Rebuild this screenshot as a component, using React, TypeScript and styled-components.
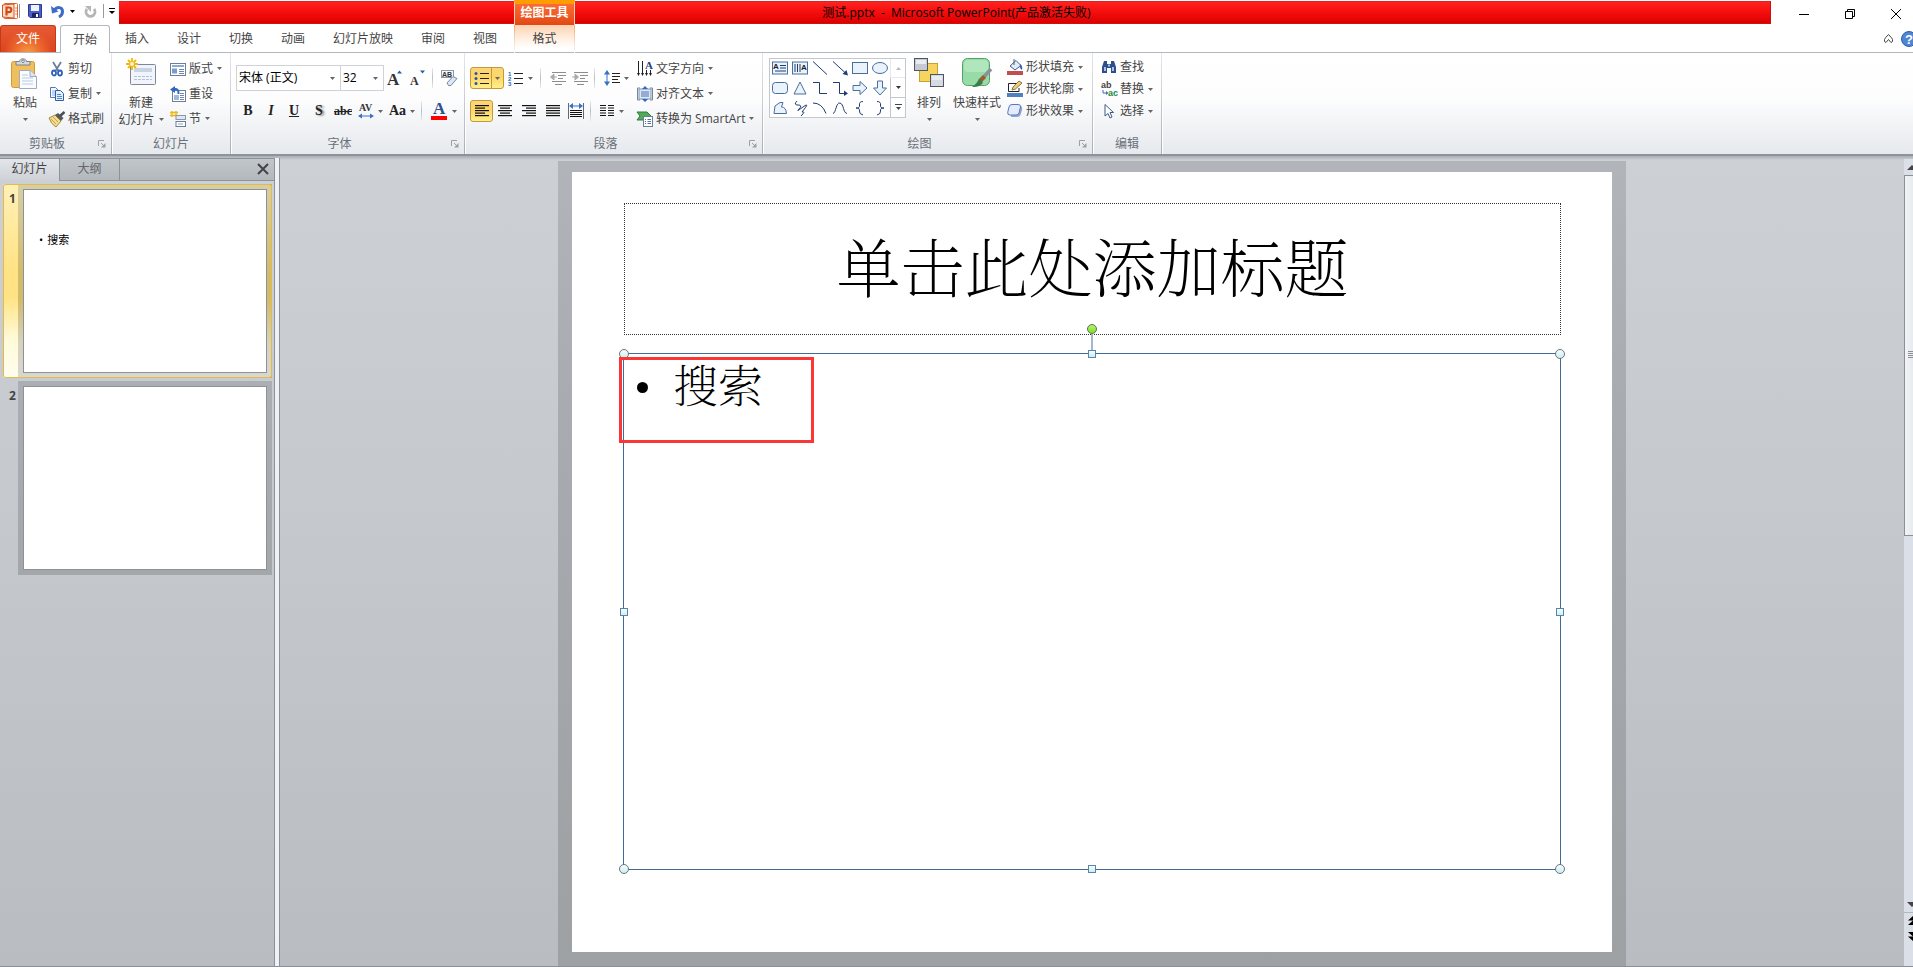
import React from "react";
import styled, { createGlobalStyle, css } from "styled-components";

const UI = `"Open Sans", "Noto Sans CJK SC", sans-serif`;
const SERIF = `"Liberation Serif", serif`;

const GlobalStyle = createGlobalStyle`
  * { box-sizing: border-box; }
  body { margin: 0; background: #fff; font-family: ${UI}; font-size: 12px; line-height: 16px; color: #444; }
  button, select { font: inherit; color: inherit; margin: 0; padding: 0; border: 0; background: none; white-space: nowrap; }
  svg { display: block; flex: none; overflow: visible; }
  h1, h2, p, ul { margin: 0; padding: 0; font-weight: 400; }
`;

/* ---------- window frame ---------- */

const Window = styled.div`
  display: flex;
  flex-direction: column;
  min-height: 100vh;
  overflow: hidden;
  border-bottom: 1px solid #8b9097;
`;

const TitleBar = styled.header`
  position: relative;
  display: flex;
  height: 25px;
`;

const QuickAccess = styled.div`
  display: flex;
  align-items: center;
  width: 119px;
  height: 22px;
  flex: none;
`;

const QuickButton = styled.button<{ $w: number }>`
  display: flex;
  align-items: center;
  justify-content: center;
  width: ${(p) => p.$w}px;
  height: 20px;
`;

const QuickRule = styled.span`
  width: 1px;
  height: 14px;
  margin-right: 2px;
  background: #9a9a9a;
`;

const RedStrip = styled.div`
  flex: 1;
  display: flex;
  height: 23px;
  margin-top: 1px;
  padding-left: 395px;
  border: 1px solid #c11;
  border-left: 0;
  border-top-color: #d22;
  background: linear-gradient(#ff231f, #f60f0f 45%, #dc0000);
`;

const ContextHeader = styled.div`
  width: 61px;
  height: 25px;
  margin-top: -2px;
  border-top: 4px solid #ff9c00;
  border-left: 1px solid #ffd0b8;
  border-right: 1px solid #ffd0b8;
  background: linear-gradient(#fb6b35, #ee5a24 55%, #e24613);
  color: #fff;
  font-weight: 700;
  text-align: center;
  line-height: 18px;
  white-space: nowrap;
`;

const DocTitle = styled.div`
  position: absolute;
  left: 0;
  right: 0;
  top: 5px;
  text-align: center;
  color: #000;
  pointer-events: none;
`;

const WindowButtons = styled.div`
  display: flex;
  margin: 0 -6px 0 10px;
`;

const WindowButton = styled.button`
  display: flex;
  align-items: center;
  justify-content: center;
  width: 46px;
  height: 28px;
`;

const TabRow = styled.nav`
  display: flex;
  height: 28px;
  border-bottom: 1px solid #b3b8bf;
`;

const FileTab = styled.button`
  width: 56px;
  height: 27px;
  margin-right: 4px;
  border: 1px solid #c23b12;
  border-bottom: 0;
  border-radius: 3px 3px 0 0;
  color: #fff;
  background: radial-gradient(ellipse at 50% 110%, #f7a04a 0, #ec6a2c 35%, transparent 65%), linear-gradient(#e65a34, #dc4420);
`;

const Tab = styled.button<{ $active?: boolean }>`
  height: 28px;
  padding: 0 14px;
  ${(p) =>
    p.$active &&
    css`
      width: 50px;
      padding: 0;
      margin-right: 1px;
      border: 1px solid #b3b8bf;
      border-bottom: 0;
      border-radius: 3px 3px 0 0;
      background: #fff;
    `}
`;

const ContextTab = styled.button`
  width: 61px;
  height: 28px;
  margin-left: 3px;
  border: 1px solid transparent;
  border-width: 0 1px;
  border-image: linear-gradient(#f3a76a, #fff) 1;
  background: linear-gradient(#fdd3b3, #fff3e8 60%, #fff 90%) 0 0 / 100% 26px no-repeat;
`;

const TabRowEnd = styled.div`
  display: flex;
  align-items: center;
  gap: 8px;
  margin: 0 -4px 0 auto;
`;

/* ---------- ribbon ---------- */

const Ribbon = styled.div`
  display: flex;
  height: 103px;
  border-bottom: 2px solid #8e939a;
  background: linear-gradient(#fff, #fdfdfe 45%, #eef0f3 80%, #e6e9ed);
`;

const Group = styled.section<{ $w: number }>`
  display: flex;
  flex-direction: column;
  flex: none;
  width: ${(p) => p.$w}px;
  height: 101px;
  border-right: 1px solid #fff;
  background: linear-gradient(#e4e6ea, #a9afb6) right / 1px 100% no-repeat;
`;

const GroupBody = styled.div<{ $pad: number }>`
  display: flex;
  flex: 1;
  padding: 3px 0 0 ${(p) => p.$pad}px;
`;

const GroupFoot = styled.footer`
  display: flex;
  align-items: center;
  height: 20px;
  padding-right: 2px;
  color: #6a7079;
`;

const GroupName = styled.h2`
  flex: 1;
  font-size: 12px;
  text-align: center;
`;

const Launcher = styled.button`
  display: flex;
  justify-content: center;
  align-items: center;
  width: 16px;
  height: 16px;
`;

const Big = styled.button<{ $w: number }>`
  display: flex;
  flex-direction: column;
  align-items: center;
  width: ${(p) => p.$w}px;
  height: 74px;
  padding-top: 2px;
`;

const BigIcon = styled.span`
  display: flex;
  height: 34px;
  margin-bottom: 2px;
`;

const BigLine = styled.span`
  display: flex;
  align-items: center;
  gap: 4px;
  height: 17px;
`;

const Stack = styled.div<{ $ml: number; $row: number }>`
  display: flex;
  flex-direction: column;
  align-items: flex-start;
  margin-left: ${(p) => p.$ml}px;
  & > button { height: ${(p) => p.$row}px; }
`;

const Small = styled.button`
  display: flex;
  align-items: center;
  gap: 3px;
`;

const CaretBox = styled.span`
  padding-left: 1px;
`;

const Rows = styled.div`
  display: flex;
  flex-direction: column;
  gap: 7px;
  padding-top: 9px;
`;

const Row = styled.div`
  display: flex;
  align-items: center;
  height: 26px;
`;

const Rule = styled.span<{ $l: number; $r: number }>`
  width: 1px;
  height: 20px;
  margin: 0 ${(p) => p.$r}px 0 ${(p) => p.$l}px;
  background: linear-gradient(#e8eaed, #b9bec5, #e8eaed);
`;

const Combo = styled.label<{ $w: number }>`
  display: flex;
  align-items: center;
  width: ${(p) => p.$w}px;
  height: 26px;
  margin-right: -1px;
  padding: 0 5px 0 2px;
  border: 1px solid #cfd3d8;
  background: #fff;
  color: #000;
`;

const ComboSelect = styled.select`
  appearance: none;
  flex: 1;
  min-width: 0;
  height: 20px;
  outline: none;
`;

const Tool = styled.button<{ $w: number }>`
  display: flex;
  align-items: center;
  justify-content: center;
  gap: 4px;
  width: ${(p) => p.$w}px;
  height: 22px;
`;

const Letter = styled(Tool)<{ $small?: boolean; $shadow?: boolean }>`
  font-family: ${SERIF};
  font-weight: 700;
  font-size: ${(p) => (p.$small ? 12 : 14)}px;
  color: #222;
  text-shadow: ${(p) => (p.$shadow ? "2px 1px 2px #888" : "none")};
`;

const gold = css`
  border: 1px solid #c29a3c;
  border-radius: 3px;
  background: linear-gradient(#fbd578, #fdd668 45%, #ffef8a);
`;

const GoldTool = styled(Tool)`
  ${gold}
`;

const SplitGold = styled.div`
  display: flex;
  width: 34px;
  height: 22px;
  ${gold}
`;

const SplitPart = styled.button<{ $w: number; $line?: boolean }>`
  display: flex;
  align-items: center;
  justify-content: center;
  width: ${(p) => p.$w}px;
  border-left: ${(p) => (p.$line ? "1px solid #c29a3c" : "0")};
`;

const Gallery = styled.div`
  display: flex;
  width: 137px;
  height: 60px;
  margin-top: 2px;
  border: 1px solid #c3c8ce;
  background: #fff;
`;

const GalleryGrid = styled.div`
  display: grid;
  grid-template-columns: repeat(6, 20px);
  grid-auto-rows: 20px;
  margin-top: -1px;
  flex: 1;
`;

const ShapeButton = styled.button`
  display: flex;
  align-items: center;
  justify-content: center;
`;

const GalleryNav = styled.div`
  display: grid;
  grid-template-rows: repeat(3, 1fr);
  width: 15px;
`;

const NavButton = styled.button<{ $off?: boolean }>`
  display: flex;
  align-items: center;
  justify-content: center;
  border-left: 1px solid #c3c8ce;
  border-bottom: 1px solid #c3c8ce;
  opacity: ${(p) => (p.$off ? 0.4 : 1)};
  &:last-child { border-bottom: 0; }
`;

/* ---------- workspace ---------- */

const Workspace = styled.main`
  display: flex;
  flex: 1;
  background: linear-gradient(#a9adb3 0, #cdd0d5 4px, #c4c7cc 50%, #b9bcc1);
`;

const Sidebar = styled.aside`
  width: 275px;
  flex: none;
  margin-top: 2px;
  border-right: 1px solid #8b9299;
  border-top: 1px solid #8b9299;
`;

const Splitter = styled.div`
  width: 5px;
  flex: none;
  margin-top: 2px;
  background: #eef1f5;
  border-right: 1px solid #8b9299;
`;

const PaneTabs = styled.div`
  display: flex;
  height: 22px;
  border-bottom: 1px solid #8b9299;
  background: linear-gradient(#c0c6ca, #b3b8bd);
`;

const PaneTab = styled.button<{ $active?: boolean }>`
  width: 60px;
  height: ${(p) => (p.$active ? 22 : 21)}px;
  padding-bottom: 2px;
  border-right: 1px solid #8b9299;
  color: ${(p) => (p.$active ? "#444" : "#666")};
  background: ${(p) => (p.$active ? "linear-gradient(#e2e5e9, #cdd0d5)" : "none")};
`;

const PaneClose = styled.button`
  display: flex;
  align-items: center;
  justify-content: center;
  width: 22px;
  height: 20px;
  margin-left: auto;
`;

const ThumbItem = styled.button<{ $active?: boolean }>`
  display: flex;
  width: 269px;
  height: 194px;
  margin: 3px 0 0 3px;
  text-align: left;
  ${(p) =>
    p.$active &&
    css`
      border-radius: 3px;
      outline: 1px solid #e3bc45;
      outline-offset: -1px;
      background: linear-gradient(#fff0b8, #ffe283 45%, #ffe283 58%, #fffbd8 80%, #fffdee);
    `}
`;

const ThumbNumber = styled.span`
  width: 15px;
  padding: 7px 0 0 6px;
  font-size: 12px;
  font-weight: 700;
`;

const ThumbFrame = styled.span<{ $active?: boolean }>`
  flex: 1;
  display: block;
  height: 194px;
  padding: 5px;
  ${(p) =>
    p.$active
      ? css`
          border: 1px solid #d5b24c;
          border-left: 0;
          padding: 4px 4px 4px 5px;
          background: linear-gradient(#d6cfa6, #d3bb6c 45%, #d3bb6c 60%, #d6d2bd 82%, #d8d7d0);
        `
      : css`
          background: linear-gradient(#abaeb3, #a3a7aa);
        `}
`;

const ThumbPage = styled.span`
  display: flex;
  gap: 4px;
  height: 184px;
  padding: 42px 0 0 15px;
  border: 1px solid #8d9198;
  background: #fff;
  color: #000;
  font-size: 11px;
`;

const Stage = styled.div`
  flex: 1;
  display: flex;
  justify-content: center;
  align-items: flex-start;
  padding-top: 5px;
  min-width: 0;
`;

const SlideFrame = styled.div`
  width: 100%;
  max-width: 1068px;
  padding: 11px 14px 14px;
  background: linear-gradient(#b1b4b9, #a8abaf 30%, #9da1a4);
`;

const Slide = styled.article`
  aspect-ratio: 4 / 3;
  padding: 3% 5% 0;
  background: #fff;
  color: #000;
  font-family: "Noto Serif CJK SC", "Noto Sans CJK SC", sans-serif;
`;

const TitleHolder = styled.div`
  display: flex;
  align-items: center;
  justify-content: center;
  height: 132px;
  margin: 0 -1px 18px 0;
  padding-bottom: 10px;
  border: 1px dotted #333;
`;

const SlideTitle = styled.h1`
  font-size: 64px;
  line-height: 72px;
  font-weight: 200;
`;

const BodyHolder = styled.div`
  position: relative;
  height: 517px;
  margin: 0 -1px;
  padding: 0 13px;
  border: 1px solid #41699a;
`;

const BulletList = styled.ul`
  list-style: none;
  font-size: 45px;
  font-weight: 200;
  line-height: 60px;
`;

const BulletItem = styled.li`
  display: flex;
  gap: 25px;
  &::before {
    content: "";
    width: 11px;
    height: 11px;
    margin-top: 28px;
    border-radius: 50%;
    background: #000;
  }
`;

const Handle = styled.span<{ $x: string; $y: string; $round?: boolean }>`
  position: absolute;
  left: ${(p) => p.$x};
  top: ${(p) => p.$y};
  width: ${(p) => (p.$round ? 10 : 8)}px;
  height: ${(p) => (p.$round ? 10 : 8)}px;
  transform: translate(-50%, -50%);
  border: 1px solid ${(p) => (p.$round ? "#6b7480" : "#5c83ab")};
  border-radius: ${(p) => (p.$round ? "50%" : "0")};
  background: linear-gradient(#f4fdfd, #cdeeee);
`;

const RotateStem = styled.span`
  position: absolute;
  left: 50%;
  top: -20px;
  width: 2px;
  height: 16px;
  margin-left: -1px;
  background: #a3b8cf;
`;

const RotateHandle = styled.span`
  position: absolute;
  left: 50%;
  top: -30px;
  width: 10px;
  height: 10px;
  margin-left: -5px;
  border: 1px solid #5d6e4c;
  border-radius: 50%;
  background: linear-gradient(#b2f56a, #7fe02a);
`;

const Callout = styled.div`
  position: absolute;
  left: -5px;
  top: 3px;
  width: 195px;
  height: 86px;
  border: 3px solid #fb3735;
`;

const ScrollColumn = styled.div`
  display: flex;
  flex-direction: column;
  width: 9px;
  flex: none;
  margin-top: 3px;
  overflow: hidden;
  background: #dbdfe8;
`;

const ScrollButton = styled.button<{ $h: number; $line?: boolean }>`
  display: flex;
  flex: none;
  align-items: center;
  width: 17px;
  height: ${(p) => p.$h}px;
  padding-left: 3px;
  border-top: ${(p) => (p.$line ? "1px solid #b4b8be" : "0")};
`;

const ScrollTrack = styled.div`
  flex: 1;
  width: 17px;
`;

const ScrollThumb = styled.div`
  display: flex;
  align-items: center;
  height: 50%;
  width: 17px;
  padding-left: 3px;
  border: 1px solid #8b9097;
  background: linear-gradient(90deg, #f2f4f7, #dfe2e7);
`;

const ScrollEnd = styled.div`
  height: 22px;
`;

/* ---------- icons ---------- */

type IconProps = { w?: number; h?: number; children: React.ReactNode };
const Icon = ({ w = 16, h = 16, children }: IconProps) => (
  <svg width={w} height={h} viewBox={`0 0 ${w} ${h}`} fill="none" aria-hidden="true">
    {children}
  </svg>
);

const Caret = ({ color = "#666" }: { color?: string }) => (
  <Icon w={5} h={3}><path d="M0 0H5L2.5 3Z" fill={color} /></Icon>
);

const LaunchIcon = () => (
  <Icon w={8} h={8}>
    <path d="M.5 6V.5H6" stroke="#9aa0a8" /><path d="M3 3l3 3" stroke="#9aa0a8" /><path d="M7.500 3v4.500H3z" fill="#9aa0a8" />
  </Icon>
);

const AppLogo = () => (
  <Icon>
    <rect x="2" y=".5" width="13.500" height="15" rx="1" fill="#fff" stroke="#e0622c" />
    <path d="M.5 2L12 1V15L.5 14Z" fill="#fbe0d0" stroke="#d9531e" />
    <path d="M4.500 12.500V4.500H7a2.300 2.300 0 0 1 0 4.600H4.500" stroke="#d24a12" strokeWidth="2.200" />
    <path d="M13 5h2M13 8h2M13 11h2" stroke="#e88a5c" />
  </Icon>
);
const SaveIcon = () => (
  <Icon w={14} h={14}>
    <path d="M.5.5H13.500V13.500H2L.5 12Z" fill="#4a5fc8" stroke="#2b3a8e" />
    <rect x="3" y="1" width="8" height="6" fill="#eef2fc" /><rect x="4" y="9" width="7" height="4.500" fill="#1d2560" /><rect x="8" y="10" width="2" height="3" fill="#fff" />
  </Icon>
);
const UndoIcon = () => (
  <Icon w={14} h={13}>
    <path d="M3 5.500C6 1.500 11.500 1.500 11.500 6.500C11.500 9.500 10 11 8 12" stroke="#3b6cc7" strokeWidth="3" /><path d="M0 1L1 8.500L7.500 6.500Z" fill="#3b6cc7" />
  </Icon>
);
const RedoIcon = () => (
  <Icon w={13} h={13}>
    <path d="M3 4A4.500 4.500 0 1 0 10 4" stroke="#b5b5b5" strokeWidth="2.800" /><path d="M1 1H7V7Z" fill="#b5b5b5" />
  </Icon>
);

const PasteIcon = () => (
  <Icon w={28} h={31}>
    <rect x=".5" y="3.500" width="23" height="26" rx="2" fill="#f0bf5c" stroke="#cf9a3d" />
    <path d="M5 7V3.500H8.500C8.500 0 15.500 0 15.500 3.500H19V7Z" fill="#d5d9de" stroke="#7b828c" />
    <circle cx="12" cy="3.200" r="1.300" fill="#fff" stroke="#7b828c" />
    <path d="M8.500 12.500H19L25.500 18.500V30.500H8.500Z" fill="#fbfcff" stroke="#9dabc4" />
    <path d="M19 12.500V18.500H25.500" fill="#dde6f5" stroke="#9dabc4" /><path d="M11 17h6M11 20h11M11 23h11M11 26h11" stroke="#b9c7df" />
  </Icon>
);
const CutIcon = () => (
  <Icon>
    <path d="M4 1L9.500 10M12 1L6.500 10" stroke="#6c7f9a" strokeWidth="1.800" />
    <ellipse cx="5" cy="12" rx="2" ry="2.500" stroke="#2f62b5" strokeWidth="1.800" /><ellipse cx="11" cy="12" rx="2" ry="2.500" stroke="#2f62b5" strokeWidth="1.800" />
  </Icon>
);
const CopyIcon = () => (
  <Icon>
    <path d="M1.500 1.500H6.500L9.500 4.500V11.500H1.500Z" fill="#f4f8ff" stroke="#4f78b8" /><path d="M3 5h4M3 7h4M3 9h4" stroke="#8fb0e0" />
    <path d="M6.500 4.500H11.500L14.500 7.500V14.500H6.500Z" fill="#e6f0fd" stroke="#2f5ea8" /><path d="M8 8.500h4M8 10.500h5M8 12.500h5" stroke="#4f85d0" />
  </Icon>
);
const BrushIcon = () => (
  <Icon>
    <path d="M0 7L6 4L12 10L7 16Q2 13 0 7Z" fill="#f3dd8c" stroke="#a68a3e" /><path d="M2 8l5 5M4 6l5 5" stroke="#c4a555" />
    <path d="M6 4L12 10L14.500 7L9 2Z" fill="#55585f" /><path d="M11 5L15.500 1" stroke="#4a4d55" strokeWidth="2.500" />
  </Icon>
);

const NewSlideIcon = () => (
  <Icon w={30} h={30}>
    <rect x="4.500" y="6.500" width="25" height="20" rx="1" fill="#f1f5fb" stroke="#7c8797" />
    <rect x="8" y="10" width="18" height="4" fill="#c8d4e6" /><path d="M8 18.500H26M8 21.500H26" stroke="#b4c2d8" strokeDasharray="3 1" />
    <path d="M6 0V12M0 6H12M2 2l8 8M10 2l-8 8" stroke="#efb70f" strokeWidth="1.800" /><circle cx="6" cy="6" r="2" fill="#fff6c5" />
  </Icon>
);
const LayoutIcon = () => (
  <Icon>
    <rect x=".5" y="2.500" width="15" height="12" fill="#fff" stroke="#6c7f99" /><rect x="2" y="4" width="12" height="2" fill="#8faad0" />
    <rect x="2" y="7.500" width="5" height="5" fill="#7b9cc9" /><path d="M9 8.500h5M9 10.500h5M9 12.500h5" stroke="#7187a8" />
  </Icon>
);
const ResetIcon = () => (
  <Icon>
    <rect x="2.500" y="4.500" width="13" height="11" fill="#fff" stroke="#6c7f99" /><rect x="4" y="9" width="5" height="5" fill="#9fb9dd" />
    <path d="M10 7.500h4M10 9.500h4M10 11.500h4M10 13.500h4" stroke="#7187a8" /><path d="M3 3.500C7 2 9 4 8.500 8" stroke="#2f67c4" strokeWidth="2" /><path d="M0 3.500L5 0V7Z" fill="#2f67c4" />
  </Icon>
);
const SectionIcon = () => (
  <Icon>
    <path d="M0 1.500h8M0 4.500h8M2 0v6M6 0v6" stroke="#efb70f" strokeWidth="1.300" />
    <rect x="6" y="4.500" width="9.500" height="4" fill="#dfe6f0" stroke="#8b98ab" /><rect x="6" y="10.500" width="9.500" height="5" fill="#fff" stroke="#6c7f99" /><path d="M8 13h5" stroke="#8ba3c6" />
  </Icon>
);

const GrowA = ({ size, up }: { size: number; up?: boolean }) => (
  <Icon w={16} h={18}>
    <text x="0" y="16" fontFamily="Liberation Serif" fontWeight="700" fontSize={size} fill="#333">A</text>
    {up ? <path d="M10 4.500h5L12.500 1.500Z" fill="#2d58a7" /> : <path d="M10 1.500h5L12.500 4.500Z" fill="#2d58a7" />}
  </Icon>
);
const ClearIcon = () => (
  <Icon>
    <rect x=".5" y=".5" width="12" height="7" fill="#f4f6fa" stroke="#8a99b0" />
    <text x="1" y="7" fontFamily="Liberation Sans" fontWeight="700" fontSize="7" fill="#333">AB</text>
    <path d="M6 13L12 6.500L16 8.500L10 15.500H7.500Z" fill="#dde7f5" stroke="#7688a3" />
  </Icon>
);
const SpacingIcon = () => (
  <Icon w={16} h={16}>
    <text x="1" y="8" fontFamily="Liberation Serif" fontWeight="700" fontSize="10" fill="#333">AV</text>
    <path d="M2 13H14" stroke="#3b6fc5" /><path d="M0 13L4 10.500V15.500ZM16 13L12 10.500V15.500Z" fill="#3b6fc5" />
  </Icon>
);
const FontColorIcon = () => (
  <Icon w={16} h={18}>
    <text x="2" y="12" fontFamily="Liberation Serif" fontWeight="700" fontSize="17" fill="#2d4f90">A</text>
    <rect y="14" width="16" height="4" fill="#f00" />
  </Icon>
);

const ListIcon = ({ numbers }: { numbers?: boolean }) => (
  <Icon w={15} h={15}>
    <path d="M6 2.500h9M6 7.500h9M6 12.500h9" stroke="#222" />
    {numbers ? (
      <g fontFamily="Liberation Sans" fontWeight="700" fontSize="6" fill="#2f62b5"><text x="0" y="5">1</text><text x="0" y="10">2</text><text x="0" y="15">3</text></g>
    ) : (
      <g fill="#2a54a4"><circle cx="2" cy="2.500" r="1.500" /><circle cx="2" cy="7.500" r="1.500" /><circle cx="2" cy="12.500" r="1.500" /></g>
    )}
  </Icon>
);
const IndentIcon = ({ right }: { right?: boolean }) => (
  <Icon>
    <path d="M2 2.500H16M8 5.500H16M8 8.500H13M2 11.500H16M5 14.500H12" stroke="#8d8d8d" />
    {right ? <path d="M0 7H4M3 4L6.500 7L3 10Z" stroke="#aaa" fill="#aaa" /> : <path d="M7 7H3M4 4L.5 7L4 10Z" stroke="#aaa" fill="#aaa" />}
  </Icon>
);
const LineSpacingIcon = () => (
  <Icon w={16} h={16}>
    <path d="M3 3V13" stroke="#3b6fc5" /><path d="M0 4.500L3 0L6 4.500ZM0 11.500L3 16L6 11.500Z" fill="#3b6fc5" />
    <path d="M8 3.500h8M8 6.500h8M8 9.500h6M8 12.500h8" stroke="#222" />
  </Icon>
);
const AlignIcon = ({ kind }: { kind: "left" | "center" | "right" | "justify" }) => {
  const short = { left: 0, center: 2, right: 4, justify: 0 }[kind];
  const len = kind === "justify" ? 14 : 10;
  return (
    <Icon w={14} h={12}>
      {[0, 1, 2, 3, 4].map((i) => (
        <rect key={i} x={i % 2 ? short : 0} y={i * 2.5} width={i % 2 ? len : 14} height="1.200" fill="#111" />
      ))}
    </Icon>
  );
};
const DistributeIcon = () => (
  <Icon>
    <path d="M.5 0V16M15.500 0V16" stroke="#667" /><path d="M4 3H12" stroke="#3b6fc5" /><path d="M1 3L5 0V6ZM15 3L11 0V6Z" fill="#3b6fc5" />
    <path d="M2 7.500H14M2 9.500H14M2 11.500H14M2 13.500H14" stroke="#111" />
  </Icon>
);
const ColumnsIcon = () => (
  <Icon w={14} h={12}>
    <path d="M0 .5h6M0 3h6M0 5.500h6M0 8h6M0 10.500h6M8 .5h6M8 3h6M8 5.500h6M8 8h6M8 10.500h6" stroke="#111" />
  </Icon>
);
const TextDirIcon = () => (
  <Icon>
    <path d="M1.500 0V14M5.500 0V14M9.500 9V14M13.500 9V14" stroke="#222" /><path d="M0 12h3L1.500 15ZM4 12h3L5.500 15ZM8 12h3L9.500 15ZM12 12h3L13.500 15Z" fill="#222" />
    <text x="8" y="8" fontFamily="Liberation Serif" fontWeight="700" fontSize="11" fill="#24407c">A</text>
  </Icon>
);
const TextAlignIcon = () => (
  <Icon>
    <path d="M.5 2H3M13 2h2.500M.5 2V14H3M15.500 2V14H13" stroke="#7a8596" /><rect x="2" y="3" width="12" height="10" fill="#dbe8fa" stroke="#7f95b5" />
    <path d="M4 6h8M4 8h8M4 10h8" stroke="#5271a3" /><path d="M5 3L8 0L11 3ZM5 13L8 16L11 13Z" fill="#2f67c4" />
  </Icon>
);
const SmartArtIcon = () => (
  <Icon>
    <path d="M0 1H10L14 5L10 9H0L3 5Z" fill="#55a95a" stroke="#2f7f3a" /><rect x="6.500" y="5.500" width="9" height="10" fill="#fff" stroke="#6c7f99" />
    <path d="M8 8.500h1M10.500 8.500H14M8 10.500h1M10.500 10.500H14M8 12.500h1M10.500 12.500H14" stroke="#5271a3" />
  </Icon>
);

const ArrangeIcon = () => (
  <Icon w={30} h={30}>
    <rect x="5.500" y="5.500" width="18" height="18" fill="#f6d45e" stroke="#c9a02e" />
    <rect x=".5" y=".5" width="13" height="12" fill="#c5cad2" stroke="#4f5661" /><rect x="16.500" y="16.500" width="13" height="12" fill="#d6dae1" stroke="#4f5661" />
    <path d="M2 2h10v4H2ZM18 18h10v4H18Z" fill="#e9ecf0" />
  </Icon>
);
const QuickStyleIcon = () => (
  <Icon w={30} h={30}>
    <rect x=".5" y=".5" width="27" height="27" rx="5" fill="#97dba6" stroke="#53a267" /><rect x="2" y="2" width="24" height="12" rx="4" fill="#b0e6bb" />
    <path d="M29 11L20 21" stroke="#8b9099" strokeWidth="3.500" /><path d="M21 17L24 20L20 24L17 21Z" fill="#9a5a32" />
    <path d="M17 20.500L21 24.500Q18 29.500 10 29Q15 26 17 20.500Z" fill="#3c7d47" />
  </Icon>
);
const FillIcon = () => (
  <Icon>
    <path d="M3 7L9 1.500L14 6.500L8 11Z" fill="#e2ecf8" stroke="#4a5e80" /><path d="M7 0V6" stroke="#4a5e80" /><path d="M13 5Q16 7 15 11Q12 9 13 5Z" fill="#2f62b5" />
    <rect y="12" width="16" height="4" fill="#c0504d" />
  </Icon>
);
const OutlineIcon = () => (
  <Icon>
    <path d="M10 2.500H1.500V10.500H12V7" stroke="#222" /><path d="M5 9L6 6L12 0L15 2L8.500 8Z" fill="#f2cf73" stroke="#6b5a2c" strokeWidth=".8" />
    <rect y="12" width="16" height="4" fill="#4f81bd" />
  </Icon>
);
const EffectIcon = () => (
  <Icon>
    <path d="M5 3H13Q16 3 15 7L13.500 12Q13 14 10 14H4Z" fill="#8fa6d6" /><path d="M5 1.500H11Q14 1.500 13.500 4L12 10Q11.500 12 9 12H3Q0 12 .8 9L2 4Q2.500 1.500 5 1.500Z" fill="#e4ecfb" stroke="#5a79bb" />
  </Icon>
);
const FindIcon = () => (
  <Icon>
    <path d="M3 2H6V5H10V2H13L15 8V14H10V9H6V14H1V8Z" fill="#2f4f8a" /><path d="M3 8h2v4H3ZM11 8h2v4H11ZM7 5.500h2v2H7Z" fill="#a9c1ea" />
  </Icon>
);
const ReplaceIcon = () => (
  <Icon>
    <text x="0" y="7" fontFamily="Liberation Sans" fontWeight="700" fontSize="9" fill="#444">ab</text>
    <path d="M2 9V12H5" stroke="#3b6fc5" /><path d="M5 10V14L7.500 12Z" fill="#3b6fc5" />
    <text x="7" y="15" fontFamily="Liberation Sans" fontWeight="700" fontSize="9" fill="#258a3a">ac</text>
  </Icon>
);
const SelectIcon = () => (
  <Icon><path d="M4 1.500V13L7 10.500L9 15L11 14L9 9.500H12.500Z" fill="#fff" stroke="#3f5a86" /></Icon>
);

const HelpIcon = () => (
  <Icon>
    <circle cx="8" cy="8" r="7.500" fill="#4f86d3" stroke="#2d5fa9" />
    <text x="8" y="13" textAnchor="middle" fontFamily="Liberation Sans" fontWeight="700" fontSize="13" fill="#fff">?</text>
  </Icon>
);

const S = "#1f3d6e";
const F = { fill: "#eaf2fc", stroke: "#47709f" };
const shapes: [string, React.ReactNode][] = [
  ["文本框", <><rect x=".5" y="2" width="15" height="12" {...F} /><text x="1" y="9" fontFamily="Liberation Sans" fontWeight="700" fontSize="8" fill="#222">A</text><path d="M8 5.500h6M8 8h6M3 11h11" stroke={S} /></>],
  ["竖排文本框", <><rect x=".5" y="2" width="15" height="12" {...F} /><path d="M3 4v8M5.500 4v8M8 4v8" stroke={S} /><text x="9" y="10" fontFamily="Liberation Sans" fontWeight="700" fontSize="8" fill="#222">A</text></>],
  ["直线", <path d="M1 1.500L15 14.500" stroke={S} />],
  ["箭头", <><path d="M1 1.500L14 13.500" stroke={S} /><path d="M16 15.500L10.500 14L14.500 10Z" fill={S} /></>],
  ["矩形", <rect x=".5" y="2.500" width="15" height="11" {...F} />],
  ["椭圆", <ellipse cx="8" cy="8" rx="7.500" ry="5.500" {...F} />],
  ["圆角矩形", <rect x=".5" y="2.500" width="15" height="11" rx="3" {...F} />],
  ["三角形", <path d="M8 2L14 14H2Z" {...F} />],
  ["肘形连接符", <path d="M1 2.500H7.500V13.500H15" stroke={S} />],
  ["肘形箭头", <><path d="M1 2.500H7.500V13.500H13" stroke={S} /><path d="M12 10.500V16L16 13.500Z" fill={S} /></>],
  ["右箭头", <path d="M1 5.500H8V1.500L15 8L8 14.500V10.500H1Z" {...F} />],
  ["下箭头", <path d="M5.500 1H10.500V8H14.500L8 15L1.500 8H5.500Z" {...F} />],
  ["任意多边形", <path d="M2 13.500L3 6L8 2.500H11L9.500 7Q14 7 14.500 13.500Z" {...F} />],
  ["自由曲线", <path d="M5 1Q1 5 6 5T7 9T11 7T10 12Q14 11 9 16" stroke={S} />],
  ["弧形", <path d="M1 3Q10 3 14 13.500" stroke={S} />],
  ["曲线", <path d="M1 13.500C4 13 4 2 8 3S11 13 15 13.500" stroke={S} />],
  ["左大括号", <path d="M11 1.500Q7 1.500 7.500 5T4 8Q8 8 7.500 11T11 15" stroke={S} />],
  ["右大括号", <path d="M5 1.500Q9 1.500 8.500 5T12 8Q8 8 8.500 11T5 15" stroke={S} />],
];

/* ---------- parts ---------- */

const Command = ({ icon, text, menu }: { icon: React.ReactNode; text: string; menu?: boolean }) => (
  <Small>
    {icon}
    {text}
    {menu && <CaretBox><Caret /></CaretBox>}
  </Small>
);

type GroupProps = { name: string; w: number; pad: number; launcher?: boolean; children: React.ReactNode };
const RibbonGroup = ({ name, w, pad, launcher, children }: GroupProps) => (
  <Group $w={w} aria-label={name}>
    <GroupBody $pad={pad}>{children}</GroupBody>
    <GroupFoot>
      <GroupName>{name}</GroupName>
      {launcher && <Launcher aria-label={`${name}选项`}><LaunchIcon /></Launcher>}
    </GroupFoot>
  </Group>
);

const tabs = ["插入", "设计", "切换", "动画", "幻灯片放映", "审阅", "视图"];
const corners = [["0%", "0%"], ["100%", "0%"], ["0%", "100%"], ["100%", "100%"]];
const edges = [["50%", "0%"], ["0%", "50%"], ["100%", "50%"], ["50%", "100%"]];

export default function App() {
  return (
    <Window>
      <GlobalStyle />
      <TitleBar>
        <QuickAccess>
          <QuickButton $w={19} aria-label="PowerPoint"><AppLogo /></QuickButton>
          <QuickRule />
          <QuickButton $w={26} aria-label="保存"><SaveIcon /></QuickButton>
          <QuickButton $w={20} aria-label="撤消"><UndoIcon /></QuickButton>
          <QuickButton $w={9} aria-label="撤消列表"><Caret color="#000" /></QuickButton>
          <QuickButton $w={26} aria-label="恢复"><RedoIcon /></QuickButton>
          <QuickRule />
          <QuickButton $w={12} aria-label="自定义快速访问工具栏">
            <Icon w={6} h={6}><path d="M0 .5H6" stroke="#000" /><path d="M0 3H6L3 6Z" fill="#000" /></Icon>
          </QuickButton>
        </QuickAccess>
        <RedStrip><ContextHeader>绘图工具</ContextHeader></RedStrip>
        <DocTitle>测试.pptx&nbsp; -&nbsp; Microsoft PowerPoint(产品激活失败)</DocTitle>
        <WindowButtons>
          <WindowButton aria-label="最小化"><Icon w={10} h={10}><path d="M0 5.500H10" stroke="#000" /></Icon></WindowButton>
          <WindowButton aria-label="还原">
            <Icon w={10} h={10}><path d="M.5 2.500H7.500V9.500H.5ZM2.500 2.500V.5H9.500V7.500H7.500" stroke="#000" /></Icon>
          </WindowButton>
          <WindowButton aria-label="关闭"><Icon w={10} h={10}><path d="M0 0L10 10M10 0L0 10" stroke="#000" /></Icon></WindowButton>
        </WindowButtons>
      </TitleBar>

      <TabRow>
        <FileTab>文件</FileTab>
        <Tab $active>开始</Tab>
        {tabs.map((t) => <Tab key={t}>{t}</Tab>)}
        <ContextTab>格式</ContextTab>
        <TabRowEnd>
          <Tool $w={10} aria-label="折叠功能区">
            <Icon w={9} h={9}><path d="M.5 5.500Q.5 4.500 4.500.5Q8.500 4.500 8.500 5.500V7.500L7 8.500L4.500 5.500L2 8.500L.5 7.500Z" stroke="#444" /></Icon>
          </Tool>
          <Tool $w={16} aria-label="帮助"><HelpIcon /></Tool>
        </TabRowEnd>
      </TabRow>

      <Ribbon>
        <RibbonGroup name="剪贴板" w={113} pad={3} launcher>
          <Big $w={44}>
            <BigIcon><PasteIcon /></BigIcon>
            <BigLine>粘贴</BigLine>
            <BigLine><Caret /></BigLine>
          </Big>
          <Stack $ml={2} $row={25}>
            <Command icon={<CutIcon />} text="剪切" />
            <Command icon={<CopyIcon />} text="复制" menu />
            <Command icon={<BrushIcon />} text="格式刷" />
          </Stack>
        </RibbonGroup>

        <RibbonGroup name="幻灯片" w={119} pad={2}>
          <Big $w={52}>
            <BigIcon><NewSlideIcon /></BigIcon>
            <BigLine>新建</BigLine>
            <BigLine>幻灯片 <Caret /></BigLine>
          </Big>
          <Stack $ml={3} $row={25}>
            <Command icon={<LayoutIcon />} text="版式" menu />
            <Command icon={<ResetIcon />} text="重设" />
            <Command icon={<SectionIcon />} text="节" menu />
          </Stack>
        </RibbonGroup>

        <RibbonGroup name="字体" w={234} pad={4} launcher>
          <Rows>
            <Row>
              <Combo $w={105}>
                <ComboSelect aria-label="字体"><option>宋体 (正文)</option></ComboSelect><Caret />
              </Combo>
              <Combo $w={44}>
                <ComboSelect aria-label="字号"><option>32</option></ComboSelect><Caret />
              </Combo>
              <Tool $w={24} aria-label="增大字号"><GrowA size={17} up /></Tool>
              <Tool $w={22} aria-label="减小字号"><GrowA size={12} /></Tool>
              <Rule $l={3} $r={5} />
              <Tool $w={22} aria-label="清除格式"><ClearIcon /></Tool>
            </Row>
            <Row>
              <Letter $w={24}>B</Letter>
              <Letter $w={22}><i>I</i></Letter>
              <Letter $w={24}><u>U</u></Letter>
              <Letter $w={26} $shadow>S</Letter>
              <Letter $w={22} $small><s>abc</s></Letter>
              <Tool $w={32} aria-label="字符间距"><SpacingIcon /><Caret /></Tool>
              <Letter $w={32}>Aa<Caret /></Letter>
              <Rule $l={3} $r={6} />
              <Tool $w={32} aria-label="字体颜色"><FontColorIcon /><CaretBox><Caret /></CaretBox></Tool>
            </Row>
          </Rows>
        </RibbonGroup>

        <RibbonGroup name="段落" w={298} pad={4} launcher>
          <Rows>
            <Row>
              <SplitGold>
                <SplitPart $w={20} aria-label="项目符号"><ListIcon /></SplitPart>
                <SplitPart $w={12} $line aria-label="项目符号列表"><Caret /></SplitPart>
              </SplitGold>
              <Tool $w={32} aria-label="编号"><ListIcon numbers /><CaretBox><Caret /></CaretBox></Tool>
              <Rule $l={4} $r={6} />
              <Tool $w={22} aria-label="降低列表级别"><IndentIcon /></Tool>
              <Tool $w={22} aria-label="提高列表级别"><IndentIcon right /></Tool>
              <Rule $l={3} $r={6} />
              <Tool $w={30} aria-label="行距"><LineSpacingIcon /><Caret /></Tool>
            </Row>
            <Row>
              <GoldTool $w={23} aria-label="文本左对齐"><AlignIcon kind="left" /></GoldTool>
              <Tool $w={24} aria-label="居中"><AlignIcon kind="center" /></Tool>
              <Tool $w={24} aria-label="文本右对齐"><AlignIcon kind="right" /></Tool>
              <Tool $w={24} aria-label="两端对齐"><AlignIcon kind="justify" /></Tool>
              <Tool $w={22} aria-label="分散对齐"><DistributeIcon /></Tool>
              <Rule $l={3} $r={6} />
              <Tool $w={30} aria-label="分栏"><ColumnsIcon /><CaretBox><Caret /></CaretBox></Tool>
            </Row>
          </Rows>
          <Stack $ml={6} $row={25}>
            <Command icon={<TextDirIcon />} text="文字方向" menu />
            <Command icon={<TextAlignIcon />} text="对齐文本" menu />
            <Command icon={<SmartArtIcon />} text="转换为 SmartArt" menu />
          </Stack>
        </RibbonGroup>

        <RibbonGroup name="绘图" w={330} pad={5} launcher>
          <Gallery>
            <GalleryGrid>
              {shapes.map(([label, drawing]) => (
                <ShapeButton key={label} aria-label={label}><Icon>{drawing}</Icon></ShapeButton>
              ))}
            </GalleryGrid>
            <GalleryNav>
              <NavButton $off aria-label="上一行"><Icon w={5} h={3}><path d="M0 3H5L2.500 0Z" fill="#555" /></Icon></NavButton>
              <NavButton aria-label="下一行"><Caret color="#333" /></NavButton>
              <NavButton aria-label="其他形状"><Icon w={7} h={6}><path d="M0 .5H7" stroke="#444" /><path d="M1 3H6L3.500 6Z" fill="#444" /></Icon></NavButton>
            </GalleryNav>
          </Gallery>
          <Big $w={46}>
            <BigIcon><ArrangeIcon /></BigIcon>
            <BigLine>排列</BigLine>
            <BigLine><Caret /></BigLine>
          </Big>
          <Big $w={50}>
            <BigIcon><QuickStyleIcon /></BigIcon>
            <BigLine>快速样式</BigLine>
            <BigLine><Caret /></BigLine>
          </Big>
          <Stack $ml={5} $row={22}>
            <Command icon={<FillIcon />} text="形状填充" menu />
            <Command icon={<OutlineIcon />} text="形状轮廓" menu />
            <Command icon={<EffectIcon />} text="形状效果" menu />
          </Stack>
        </RibbonGroup>

        <RibbonGroup name="编辑" w={69} pad={7}>
          <Stack $ml={0} $row={22}>
            <Command icon={<FindIcon />} text="查找" />
            <Command icon={<ReplaceIcon />} text="替换" menu />
            <Command icon={<SelectIcon />} text="选择" menu />
          </Stack>
        </RibbonGroup>
      </Ribbon>

      <Workspace>
        <Sidebar>
          <PaneTabs>
            <PaneTab $active>幻灯片</PaneTab>
            <PaneTab>大纲</PaneTab>
            <PaneClose aria-label="关闭窗格">
              <Icon w={10} h={10}><path d="M0 0L10 10M10 0L0 10" stroke="#444" strokeWidth="2" /></Icon>
            </PaneClose>
          </PaneTabs>
          <ThumbItem $active>
            <ThumbNumber>1</ThumbNumber>
            <ThumbFrame $active><ThumbPage><span>•</span><span>搜索</span></ThumbPage></ThumbFrame>
          </ThumbItem>
          <ThumbItem>
            <ThumbNumber>2</ThumbNumber>
            <ThumbFrame><ThumbPage /></ThumbFrame>
          </ThumbItem>
        </Sidebar>
        <Splitter />
        <Stage>
          <SlideFrame>
            <Slide>
              <TitleHolder><SlideTitle>单击此处添加标题</SlideTitle></TitleHolder>
              <BodyHolder>
                <BulletList><BulletItem>搜索</BulletItem></BulletList>
                <RotateStem />
                <RotateHandle />
                {corners.map(([x, y]) => <Handle key={x + y} $x={x} $y={y} $round />)}
                {edges.map(([x, y]) => <Handle key={x + y} $x={x} $y={y} />)}
                <Callout />
              </BodyHolder>
            </Slide>
          </SlideFrame>
        </Stage>
        <ScrollColumn>
          <ScrollButton $h={16} aria-label="向上滚动"><Icon w={10} h={5}><path d="M0 5H10L5 0Z" fill="#444" /></Icon></ScrollButton>
          <ScrollTrack>
            <ScrollThumb><Icon w={9} h={8}><path d="M0 .5H9M0 2.500H9M0 4.500H9M0 6.500H9" stroke="#8b9097" /></Icon></ScrollThumb>
          </ScrollTrack>
          <ScrollButton $h={16} aria-label="向下滚动"><Icon w={10} h={5}><path d="M0 0H10L5 5Z" fill="#444" /></Icon></ScrollButton>
          <ScrollButton $h={16} $line aria-label="上一张幻灯片"><Icon w={12} h={9}><path d="M1 4.500H11L6 0ZM1 9H11L6 4.500Z" fill="#000" /></Icon></ScrollButton>
          <ScrollButton $h={16} aria-label="下一张幻灯片"><Icon w={12} h={9}><path d="M1 0H11L6 4.500ZM1 4.500H11L6 9Z" fill="#000" /></Icon></ScrollButton>
          <ScrollEnd />
        </ScrollColumn>
      </Workspace>
    </Window>
  );
}
